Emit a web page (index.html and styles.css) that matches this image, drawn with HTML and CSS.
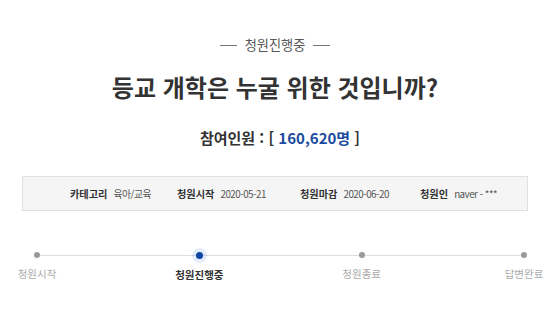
FILE: index.html
```html
<!DOCTYPE html>
<html lang="ko">
<head>
<meta charset="utf-8">
<link rel="stylesheet" href="styles.css">
</head>
<body>
<div class="page">
  <div class="status"><span class="rule"></span><span class="status-text">청원진행중</span><span class="rule"></span></div>
  <h1 class="title">등교 개학은 누굴 위한 것입니까?</h1>
  <div class="count">참여인원 : [ <span class="num">160,620명</span> ]</div>
  <ul class="info">
    <li><b>카테고리</b><span>육아/교육</span></li>
    <li><b>청원시작</b><span>2020-05-21</span></li>
    <li><b>청원마감</b><span>2020-06-20</span></li>
    <li><b>청원인</b><span>naver - ***</span></li>
  </ul>
  <div class="progress">
    <div class="track"></div>
    <div class="step"><i class="dot"></i><span>청원시작</span></div>
    <div class="step active"><i class="dot"></i><span>청원진행중</span></div>
    <div class="step"><i class="dot"></i><span>청원종료</span></div>
    <div class="step"><i class="dot"></i><span>답변완료</span></div>
  </div>
</div>
</body>
</html>
```

FILE: styles.css
```css
* { box-sizing: border-box; }
html, body { margin: 0; padding: 0; background: #fff; }
body { font-family: "Noto Sans CJK KR", "Noto Sans", sans-serif; color: #333; }
.page { width: 550px; height: 317px; overflow: hidden; padding-top: 35px; }
.status { display: flex; justify-content: center; align-items: center; gap: 8px; height: 20px; }
.rule { width: 17px; height: 1px; background: #777; }
.status-text { font-size: 13.2px; color: #555; line-height: 20px; }
.title { margin: 12px 0 0; text-align: center; font-size: 24px; font-weight: 700; line-height: 40px; color: #333; letter-spacing: 0; }
.count { margin: 19px 0 0 10px; text-align: center; font-size: 15px; font-weight: 700; line-height: 24px; color: #333; }
.count .num { color: #1b4b9e; }
.info { list-style: none; margin: 26px 22px 0; padding: 0 0 0 47px; height: 35px; display: grid; grid-template-columns: 107px 123px 120px auto; align-items: center; background: #f5f5f5; border: 1px solid #e0e0e0; font-size: 10.5px; color: #555; }
.info li { display: flex; align-items: baseline; gap: 6px; white-space: nowrap; }
.info b { color: #333; font-weight: 700; font-size: 10.2px; }
.info span { font-size: 9.8px; letter-spacing: -0.5px; }
.progress { position: relative; display: flex; justify-content: space-between; margin: 36px 1px 0 12px; }
.track { position: absolute; left: 25px; right: 25px; top: 8px; height: 1px; background: #ddd; }
.step { position: relative; width: 50px; display: flex; flex-direction: column; align-items: center; gap: 9px; }
.dot { display: block; width: 6px; height: 6px; margin-top: 5px; border-radius: 50%; background: #999; }
.step span { font-size: 10.5px; color: #aaa; white-space: nowrap; line-height: 14px; }
.step.active .dot { width: 7px; height: 7px; margin-top: 5px; background: #0b48a4; box-shadow: 0 0 0 4px rgba(40, 110, 220, 0.12); }
.step.active span { color: #333; font-weight: 700; }
```
